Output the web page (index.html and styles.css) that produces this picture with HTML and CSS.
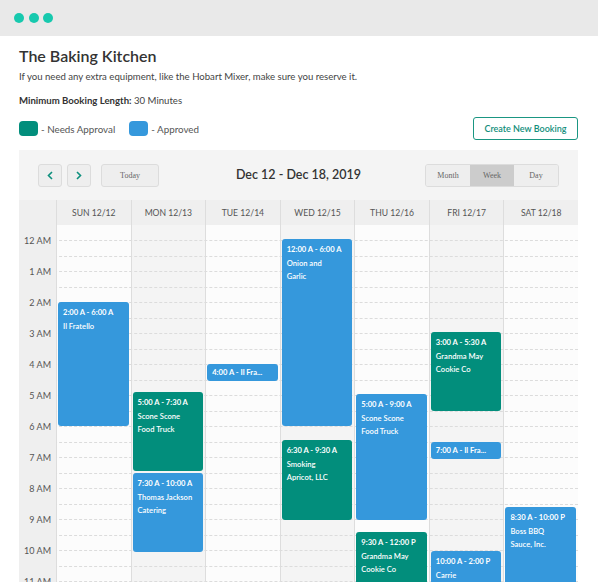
FILE: index.html
```html
<!DOCTYPE html>
<html>
<head>
<meta charset="utf-8">
<link rel="stylesheet" href="styles.css">
</head>
<body>
<div class="topbar"><span class="dot"></span><span class="dot"></span><span class="dot"></span></div>
<div class="page">
  <h1 class="title">The Baking Kitchen</h1>
  <p class="subtitle">If you need any extra equipment, like the Hobart Mixer, make sure you reserve it.</p>
  <p class="minlen"><b>Minimum Booking Length:</b> 30 Minutes</p>
  <div class="legend-row">
    <div class="legend">
      <span class="swatch teal"></span><span class="legend-text">- Needs Approval</span>
      <span class="swatch blue"></span><span class="legend-text">- Approved</span>
    </div>
    <button class="create">Create New Booking</button>
  </div>

  <div class="calendar">
    <div class="toolbar">
      <div class="nav">
        <button class="btn arrow"><svg width="6" height="9" viewBox="0 0 6 9"><path d="M5 1 L1.5 4.5 L5 8" fill="none" stroke="#0d8f7d" stroke-width="1.6"/></svg></button>
        <button class="btn arrow"><svg width="6" height="9" viewBox="0 0 6 9"><path d="M1 1 L4.5 4.5 L1 8" fill="none" stroke="#0d8f7d" stroke-width="1.6"/></svg></button>
        <button class="btn today">Today</button>
      </div>
      <div class="range">Dec 12 - Dec 18, 2019</div>
      <div class="views">
        <button class="view">Month</button><button class="view active">Week</button><button class="view">Day</button>
      </div>
    </div>

    <div class="head">
      <div class="hcell corner"></div>
      <div class="hcell">SUN 12/12</div>
      <div class="hcell">MON 12/13</div>
      <div class="hcell">TUE 12/14</div>
      <div class="hcell">WED 12/15</div>
      <div class="hcell">THU 12/16</div>
      <div class="hcell">FRI 12/17</div>
      <div class="hcell">SAT 12/18</div>
    </div>

    <div class="grid">
      <div class="lines">
        <div class="line first"></div>
        <div class="line"></div><div class="line"></div><div class="line"></div><div class="line"></div>
        <div class="line"></div><div class="line"></div><div class="line"></div><div class="line"></div>
        <div class="line"></div><div class="line"></div><div class="line"></div><div class="line"></div>
        <div class="line"></div><div class="line"></div><div class="line"></div><div class="line"></div>
        <div class="line"></div><div class="line"></div><div class="line"></div><div class="line"></div>
        <div class="line"></div><div class="line"></div><div class="line"></div><div class="line"></div>
      </div>
      <div class="times">
        <div class="tl">12 AM</div><div class="tl">1 AM</div><div class="tl">2 AM</div><div class="tl">3 AM</div>
        <div class="tl">4 AM</div><div class="tl">5 AM</div><div class="tl">6 AM</div><div class="tl">7 AM</div>
        <div class="tl">8 AM</div><div class="tl">9 AM</div><div class="tl">10 AM</div><div class="tl">11 AM</div>
      </div>
      <div class="day">
        <div class="ev blue" style="top:77px;height:124px"><div class="et">2:00 A - 6:00 A</div><div class="en">Il Fratello</div></div>
      </div>
      <div class="day alt">
        <div class="ev teal" style="top:167px;height:79px"><div class="et">5:00 A - 7:30 A</div><div class="en">Scone Scone<br>Food Truck</div></div>
        <div class="ev blue" style="top:248px;height:79px"><div class="et">7:30 A - 10:00 A</div><div class="en">Thomas Jackson<br>Catering</div></div>
      </div>
      <div class="day">
        <div class="ev blue short" style="top:139px;height:17px">4:00 A - Il Fra...</div>
      </div>
      <div class="day alt">
        <div class="ev blue" style="top:14px;height:187px"><div class="et">12:00 A - 6:00 A</div><div class="en">Onion and<br>Garlic</div></div>
        <div class="ev teal" style="top:215px;height:80px"><div class="et">6:30 A - 9:30 A</div><div class="en">Smoking<br>Apricot, LLC</div></div>
      </div>
      <div class="day">
        <div class="ev blue" style="top:169px;height:126px"><div class="et">5:00 A - 9:00 A</div><div class="en">Scone Scone<br>Food Truck</div></div>
        <div class="ev teal" style="top:307px;height:200px"><div class="et">9:30 A - 12:00 P</div><div class="en">Grandma May<br>Cookie Co</div></div>
      </div>
      <div class="day alt">
        <div class="ev teal" style="top:107px;height:79px"><div class="et">3:00 A - 5:30 A</div><div class="en">Grandma May<br>Cookie Co</div></div>
        <div class="ev blue short" style="top:217px;height:17px">7:00 A - Il Fra...</div>
        <div class="ev blue" style="top:326px;height:200px"><div class="et">10:00 A - 2:00 P</div><div class="en">Carrie</div></div>
      </div>
      <div class="day">
        <div class="ev blue" style="top:282px;height:300px"><div class="et">8:30 A - 10:00 P</div><div class="en">Boss BBQ<br>Sauce, Inc.</div></div>
      </div>
    </div>
  </div>
</div>
</body>
</html>
```

FILE: styles.css
```css
* { box-sizing: border-box; }
html, body { margin: 0; padding: 0; }
body {
  width: 598px;
  height: 582px;
  overflow: hidden;
  background: #fff;
  font-family: Lato, "Noto Sans", sans-serif;
  color: #444;
}
.topbar {
  height: 36px;
  background: #e9e9e9;
  display: flex;
  align-items: center;
  gap: 4.5px;
  padding-left: 14px;
}
.dot {
  width: 10px;
  height: 10px;
  border-radius: 50%;
  background: #17c9ae;
}
.page { padding: 10px 20px 0 19px; }
.title {
  margin: 0;
  font-size: 16px;
  line-height: 20px;
  font-weight: 600;
  color: #333;
}
.subtitle {
  margin: 5px 0 0;
  font-size: 9.6px;
  line-height: 12px;
  color: #444;
}
.minlen {
  margin: 12px 0 0;
  font-size: 9.6px;
  line-height: 12px;
  color: #444;
}
.minlen b { font-weight: 700; color: #333; }
.legend-row {
  margin-top: 10px;
  height: 23px;
  display: flex;
  align-items: center;
  justify-content: space-between;
}
.legend { display: flex; align-items: center; }
.swatch {
  width: 19px;
  height: 15px;
  border-radius: 4px;
}
.swatch.teal { background: #028e7c; }
.swatch.blue { background: #3598dc; margin-left: 14px; }
.legend-text {
  font-size: 9.8px;
  color: #555;
  margin-left: 3px;
}
.create {
  width: 105px;
  height: 23px;
  border: 1px solid #1a9682;
  border-radius: 3px;
  background: #fff;
  color: #118e7b;
  font-family: Lato, sans-serif;
  font-size: 9px;
  font-weight: 600;
  padding: 0;
}
.calendar { margin-top: 10px; }
.toolbar {
  height: 50px;
  background: #f4f4f4;
  display: grid;
  grid-template-columns: 1fr auto 1fr;
  align-items: center;
  padding: 0 19px;
}
.nav { display: flex; align-items: center; }
.btn {
  height: 23px;
  border: 1px solid #dcdcdc;
  border-radius: 3px;
  background: #eeeeee;
  padding: 0;
  display: flex;
  align-items: center;
  justify-content: center;
}
.arrow { width: 24px; margin-right: 5px; }
.today {
  width: 58px;
  margin-left: 5px;
  font-family: "Liberation Serif", serif;
  font-size: 8px;
  color: #666;
}
.range {
  font-size: 12.5px;
  font-weight: 600;
  color: #333;
  margin-top: -1px;
}
.views {
  justify-self: end;
  display: flex;
  border: 1px solid #dcdcdc;
  border-radius: 3px;
  overflow: hidden;
}
.view {
  width: 44px;
  height: 21px;
  border: 0;
  background: #eeeeee;
  font-family: "Liberation Serif", serif;
  font-size: 8px;
  color: #666;
  padding: 0;
}
.view.active { background: #cccccc; }
.head {
  display: grid;
  grid-template-columns: 37px repeat(7, 1fr);
  height: 25px;
  background: #efefef;
}
.hcell {
  border-left: 1px solid #dddddd;
  display: flex;
  align-items: center;
  justify-content: center;
  font-size: 8.6px;
  color: #555;
}
.hcell.corner { border-left: 0; }
.grid {
  position: relative;
  display: grid;
  grid-template-columns: 37px repeat(7, 1fr);
  height: 400px;
}
.lines {
  position: absolute;
  inset: 0;
  z-index: 1;
  pointer-events: none;
}
.line {
  height: 15.5px;
  border-top: 1px dashed #dcdcdc;
}
.line.first { height: 15px; border-top: 0; }
.times {
  background: #efefef;
  position: relative;
  z-index: 2;
}
.tl {
  height: 31px;
  line-height: 31px;
  text-align: right;
  padding-right: 5px;
  font-size: 9px;
  color: #555;
}
.day {
  position: relative;
  background: #fcfcfc;
  border-left: 1px solid #dddddd;
}
.day.alt { background: #f4f4f4; }
.ev {
  position: absolute;
  left: 1px;
  right: 2px;
  z-index: 3;
  border-radius: 3px;
  color: #fff;
  padding: 4px 5px 0;
  font-size: 7.6px;
  line-height: 13.5px;
  overflow: hidden;
}
.ev.blue { background: #3598dc; }
.ev.teal { background: #028e7c; }
.et { font-weight: 700; }
.en { font-weight: 600; }
.ev.short {
  padding: 0 5px;
  line-height: 17px;
  font-weight: 700;
  white-space: nowrap;
}
```
